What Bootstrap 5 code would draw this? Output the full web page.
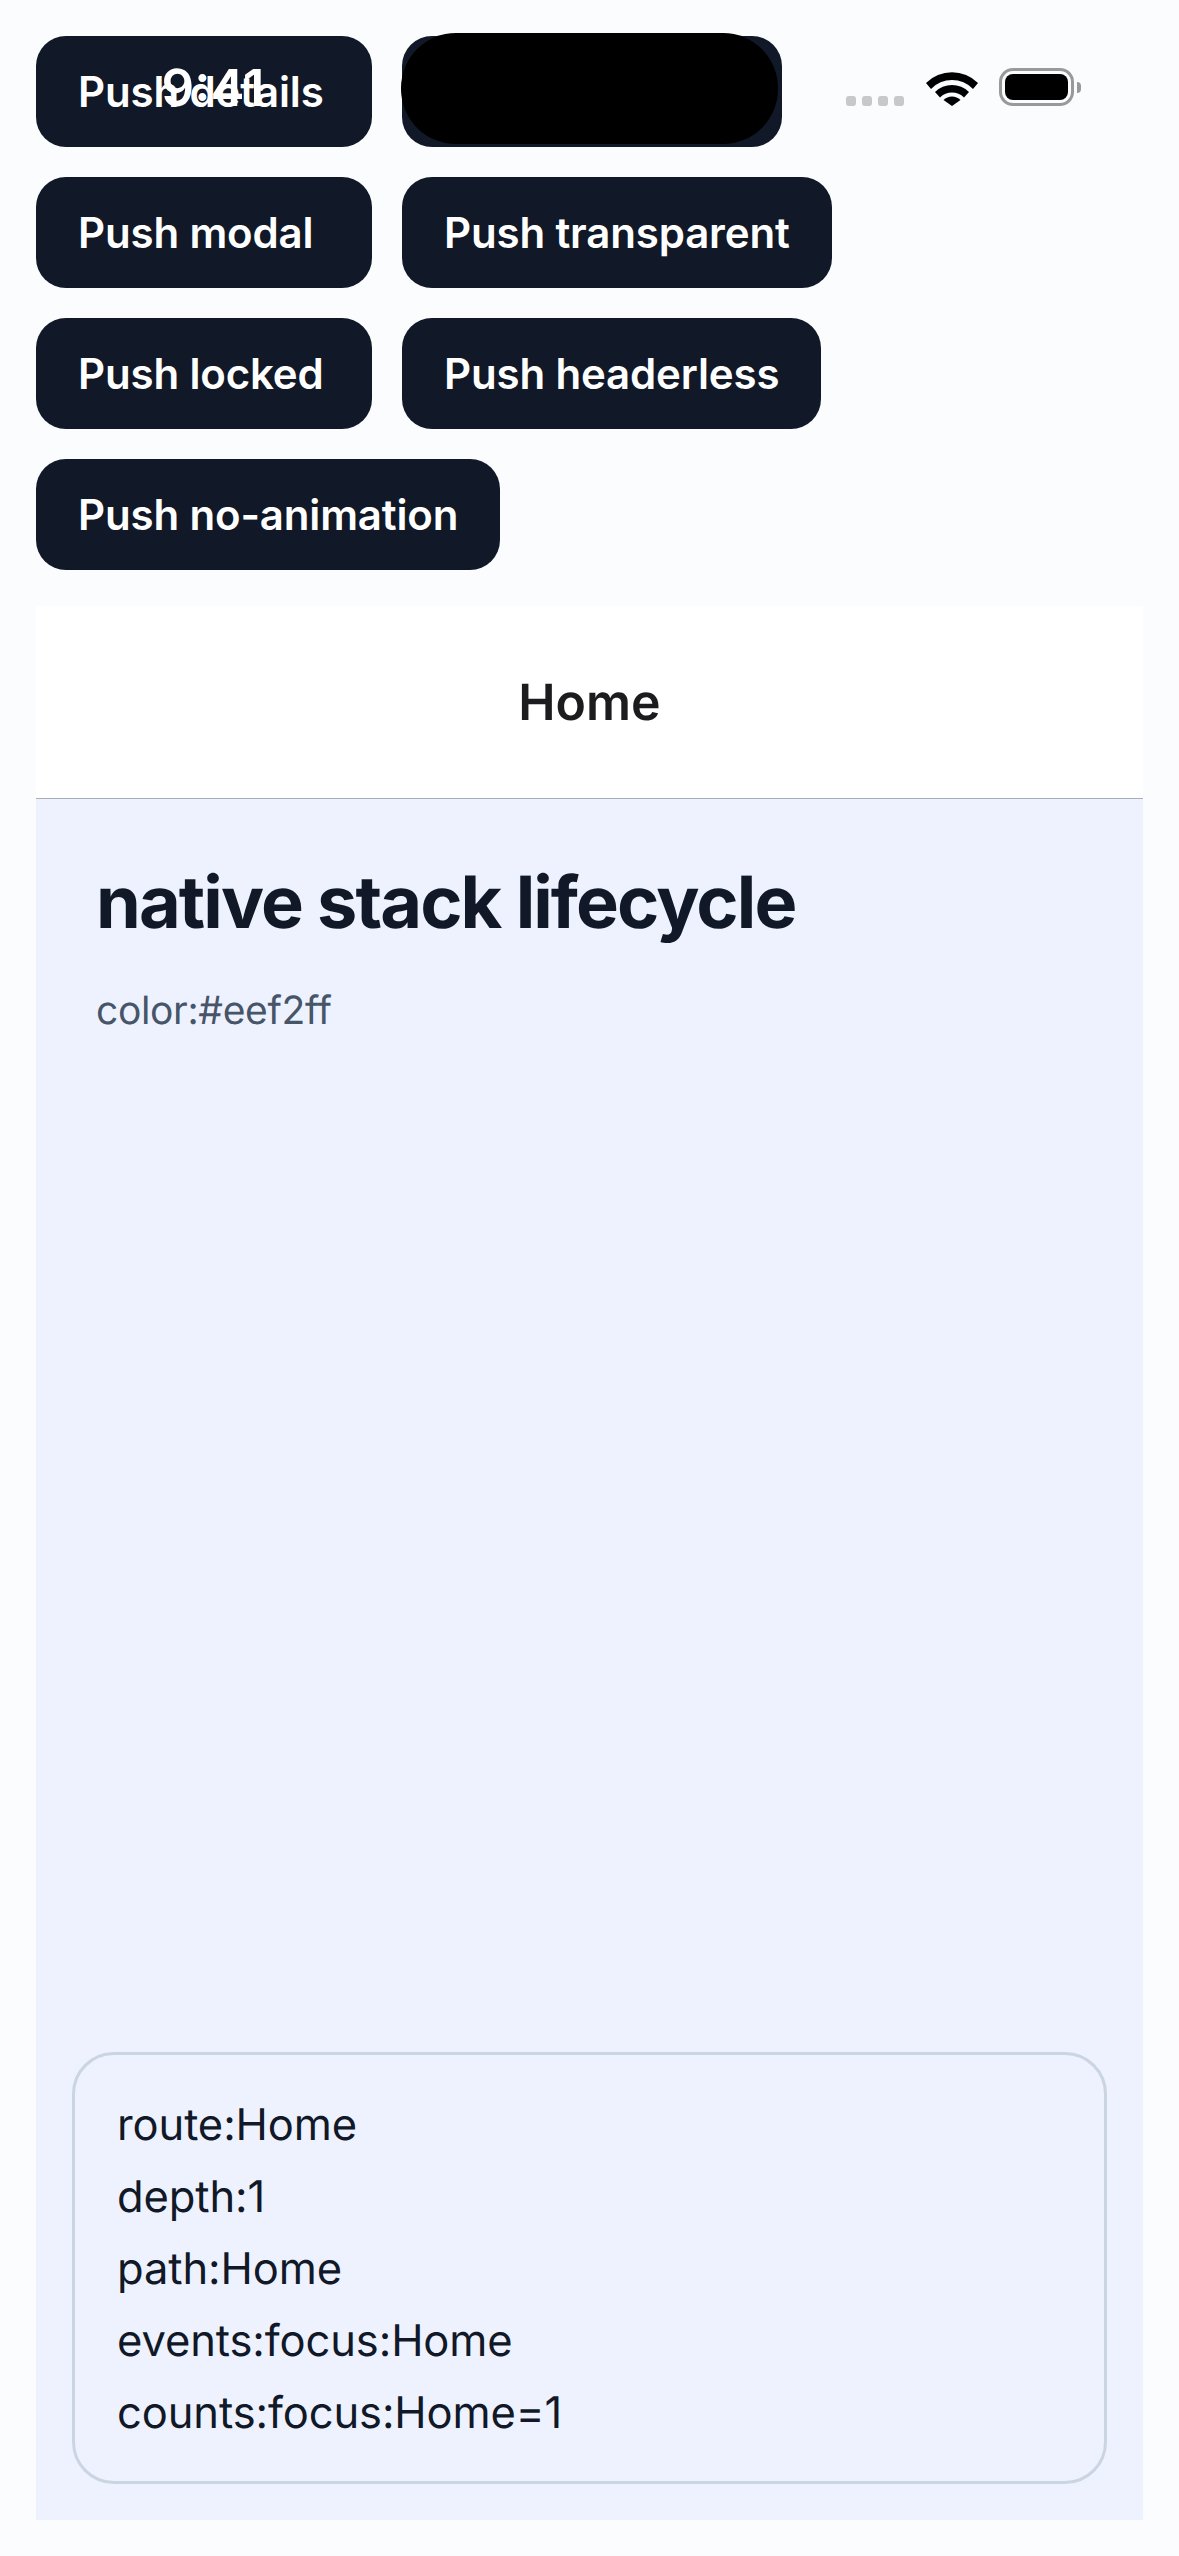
<!DOCTYPE html>
<html lang="en">
<head>
<meta charset="utf-8">
<title>native stack lifecycle</title>
<link rel="stylesheet" href="https://cdn.jsdelivr.net/npm/bootstrap@5.3.0/dist/css/bootstrap.min.css">
<style>
html,body{height:100%}
body{background:#fafcfe;font-family:Inter,"Noto Sans",sans-serif;color:#111827;text-rendering:geometricPrecision}
.shell{height:2556px;padding:36px;gap:36px;width:1179px}
.push-list{gap:30px}
.push-btn{background:#111827;border:0;color:#fff;font-family:Inter,sans-serif;font-weight:600;font-size:42px;letter-spacing:-.15px;line-height:111px;height:111px;padding:0 42px;border-radius:30px;white-space:nowrap;min-width:336px;text-align:left}
.push-btn:hover{background:#111827;color:#fff}
.push-covered{width:380px}
.screen-frame{min-height:0}
.screen-head{height:193px;background:#fff;border-bottom:1px solid #a8adb8;font-weight:600;font-size:50px;color:#1c1c1e;padding-top:2px}
.screen-body{background:#eef2ff;padding:60px 36px 36px}
.screen-title{font-size:72px;font-weight:700;line-height:1.2;letter-spacing:-1.9px;margin:1px 0 0 24px;color:#111827}
.screen-sub{font-size:39px;letter-spacing:-.35px;color:#475569;margin:35px 0 0 24px;line-height:60px}
.log-box{border:3px solid #cbd5e1;border-radius:42px;padding:34px 42px 32px;font-size:43.5px;letter-spacing:-.1px;line-height:72px;color:#111827}
.status-bar{left:0;top:0;width:1179px;height:150px;pointer-events:none}
.clock{left:100px;top:58px;width:226px;text-align:center;font-weight:600;font-size:51px;line-height:62px;color:#fff}
.island{left:401px;top:33px;width:377px;height:111px;background:#000;border-radius:55px}
.dots{left:846px;top:96px;gap:6px}
.sig-dot{width:10px;height:10px;border-radius:3px;background:#c7c7cc}
.wifi-icon{left:926px;top:69px;width:52px;height:37px}
.batt{left:999px;top:68px;width:75px;height:38px;border:3px solid #999;border-radius:14px;padding:3px}
.batt-fill{background:#000;border-radius:8px;height:100%}
.batt-nub{left:1077px;top:82px;width:4px;height:11px;background:#999;border-radius:0 6px 6px 0}
</style>
</head>
<body class="m-0">
<div class="shell d-flex flex-column">
  <div class="push-list d-flex flex-wrap">
    <button class="btn push-btn" type="button">Push details</button>
    <button class="btn push-btn push-covered" type="button">Push settings</button>
    <button class="btn push-btn" type="button">Push modal</button>
    <button class="btn push-btn" type="button">Push transparent</button>
    <button class="btn push-btn" type="button">Push locked</button>
    <button class="btn push-btn" type="button">Push headerless</button>
    <button class="btn push-btn" type="button">Push no-animation</button>
  </div>
  <div class="screen-frame flex-grow-1 d-flex flex-column">
    <div class="screen-head d-flex align-items-center justify-content-center">Home</div>
    <div class="screen-body flex-grow-1 d-flex flex-column">
      <h1 class="screen-title">native stack lifecycle</h1>
      <p class="screen-sub">color:#eef2ff</p>
      <div class="log-box mt-auto">
        <div>route:Home</div>
        <div>depth:1</div>
        <div>path:Home</div>
        <div>events:focus:Home</div>
        <div>counts:focus:Home=1</div>
      </div>
    </div>
  </div>
</div>
<div class="status-bar position-absolute">
  <div class="clock position-absolute">9:41</div>
  <div class="island position-absolute"></div>
  <div class="dots position-absolute d-flex"><span class="sig-dot"></span><span class="sig-dot"></span><span class="sig-dot"></span><span class="sig-dot"></span></div>
  <svg class="wifi-icon position-absolute" viewBox="0 0 52 37" aria-hidden="true">
    <path d="M0 14 A37 37 0 0 1 52 14 L47 20 A29 29 0 0 0 5 20 Z" fill="#000"/>
    <path d="M9 23 A24 24 0 0 1 43 23 L38 28.5 A17 17 0 0 0 14 28.5 Z" fill="#000"/>
    <path d="M17.5 31 A12 12 0 0 1 34.5 31 L26 37 Z" fill="#000"/>
  </svg>
  <div class="batt position-absolute"><div class="batt-fill"></div></div>
  <div class="batt-nub position-absolute"></div>
</div>
<script src="https://cdn.jsdelivr.net/npm/bootstrap@5.3.0/dist/js/bootstrap.bundle.min.js"></script>
</body>
</html>
